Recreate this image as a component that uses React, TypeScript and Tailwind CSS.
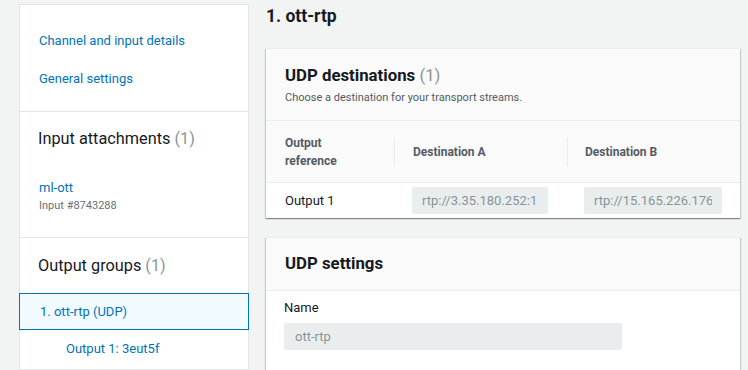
import React from "react";

const cardShadow =
  "shadow-[0_1px_1px_0_rgba(0,28,36,0.3),1px_1px_1px_0_rgba(0,28,36,0.15),-1px_1px_1px_0_rgba(0,28,36,0.15)]";

export default function App() {
  return (
    <div className="w-[748px] h-[370px] overflow-hidden bg-[#f2f3f3] flex text-[#16191f] font-['Roboto',sans-serif]">
      {/* Sidebar */}
      <div className="ml-[19px] mt-[4px] w-[230px] shrink-0 bg-white border border-[#e4e6e6] flex flex-col">
        <div className="pt-[26px] pb-[22px] flex flex-col gap-[18px]">
          <a className="pl-[19px] text-[13px] leading-[20px] text-[#0073bb]">Channel and input details</a>
          <a className="pl-[19px] text-[13px] leading-[20px] text-[#0073bb]">General settings</a>
        </div>
        <div className="border-t border-[#e4e6e6] pt-[15px] pb-[22px] flex flex-col">
          <div className="pl-[18px] text-[16.3px] leading-[24px]">
            Input attachments <span className="text-[#879596]">(1)</span>
          </div>
          <div className="pl-[19px] mt-[27px] text-[13px] leading-[20px] text-[#0073bb]">ml-ott</div>
          <div className="pl-[19px] mt-[-1px] text-[11px] leading-[18px] text-[#687078]">Input #8743288</div>
        </div>
        <div className="border-t border-[#e4e6e6] pt-[16px] flex flex-col">
          <div className="pl-[18px] text-[16.3px] leading-[24px]">
            Output groups <span className="text-[#879596]">(1)</span>
          </div>
          <div className="mt-[15px] -mx-px border border-[#0073bb] bg-[#f1faff] h-[37px] flex items-center pl-[20px] text-[13px] text-[#0073bb]">
            1. ott-rtp (UDP)
          </div>
          <div className="pl-[46px] mt-[9px] text-[13px] leading-[20px] text-[#0073bb]">Output 1: 3eut5f</div>
        </div>
      </div>

      {/* Main */}
      <div className="ml-[17px] w-[474px] shrink-0 flex flex-col">
        <div className="mt-[5px] h-[22px] text-[17.5px] leading-[22px] font-bold">1. ott-rtp</div>

        <div className={`mt-[21px] bg-white border-t border-[#eaeded] ${cardShadow}`}>
          <div className="bg-[#fafafa] border-b border-[#eaeded] pl-[19px] pt-[14px] pb-[13px]">
            <div className="text-[16.8px] leading-[24px] font-bold">
              UDP destinations <span className="font-normal text-[#879596]">(1)</span>
            </div>
            <div className="text-[11px] leading-[18px] text-[#545b64] mt-[2px]">
              Choose a destination for your transport streams.
            </div>
          </div>
          <div className="flex h-[62px] bg-[#fafafa] border-b border-[#eaeded] text-[12px] font-bold text-[#545b64]">
            <div className="w-[128px] pl-[19px] flex items-center leading-[18px]">
              Output
              <br />
              reference
            </div>
            <div className="w-[173px] flex items-center">
              <div className="w-px h-[30px] bg-[#eaeded]" />
              <div className="pl-[18px]">Destination A</div>
            </div>
            <div className="flex-1 flex items-center">
              <div className="w-px h-[30px] bg-[#eaeded]" />
              <div className="pl-[17px]">Destination B</div>
            </div>
          </div>
          <div className="flex h-[35px] items-center text-[13px]">
            <div className="w-[146px] pl-[19px]">Output 1</div>
            <div className="w-[136px] h-[27px] rounded-[2px] bg-[#eaeded] text-[#879596] px-[10px] flex items-center">
              <div className="overflow-hidden whitespace-nowrap">rtp://3.35.180.252:1234</div>
            </div>
            <div className="w-[36px]" />
            <div className="w-[138px] h-[27px] rounded-[2px] bg-[#eaeded] text-[#879596] px-[10px] flex items-center">
              <div className="overflow-hidden whitespace-nowrap">rtp://15.165.226.176:5000</div>
            </div>
          </div>
        </div>

        <div className={`mt-[19px] bg-white border-t border-[#eaeded] flex-1 ${cardShadow}`}>
          <div className="bg-[#fafafa] border-b border-[#eaeded] h-[53px] pl-[19px] flex items-center text-[16.8px] font-bold">
            UDP settings
          </div>
          <div className="pl-[18px] pt-[7px]">
            <div className="text-[13px] leading-[20px]">Name</div>
            <div className="mt-[5px] w-[338px] h-[27px] rounded-[2px] bg-[#eaeded] text-[#879596] text-[13px] pl-[11px] flex items-center">
              ott-rtp
            </div>
          </div>
        </div>
      </div>
    </div>
  );
}
